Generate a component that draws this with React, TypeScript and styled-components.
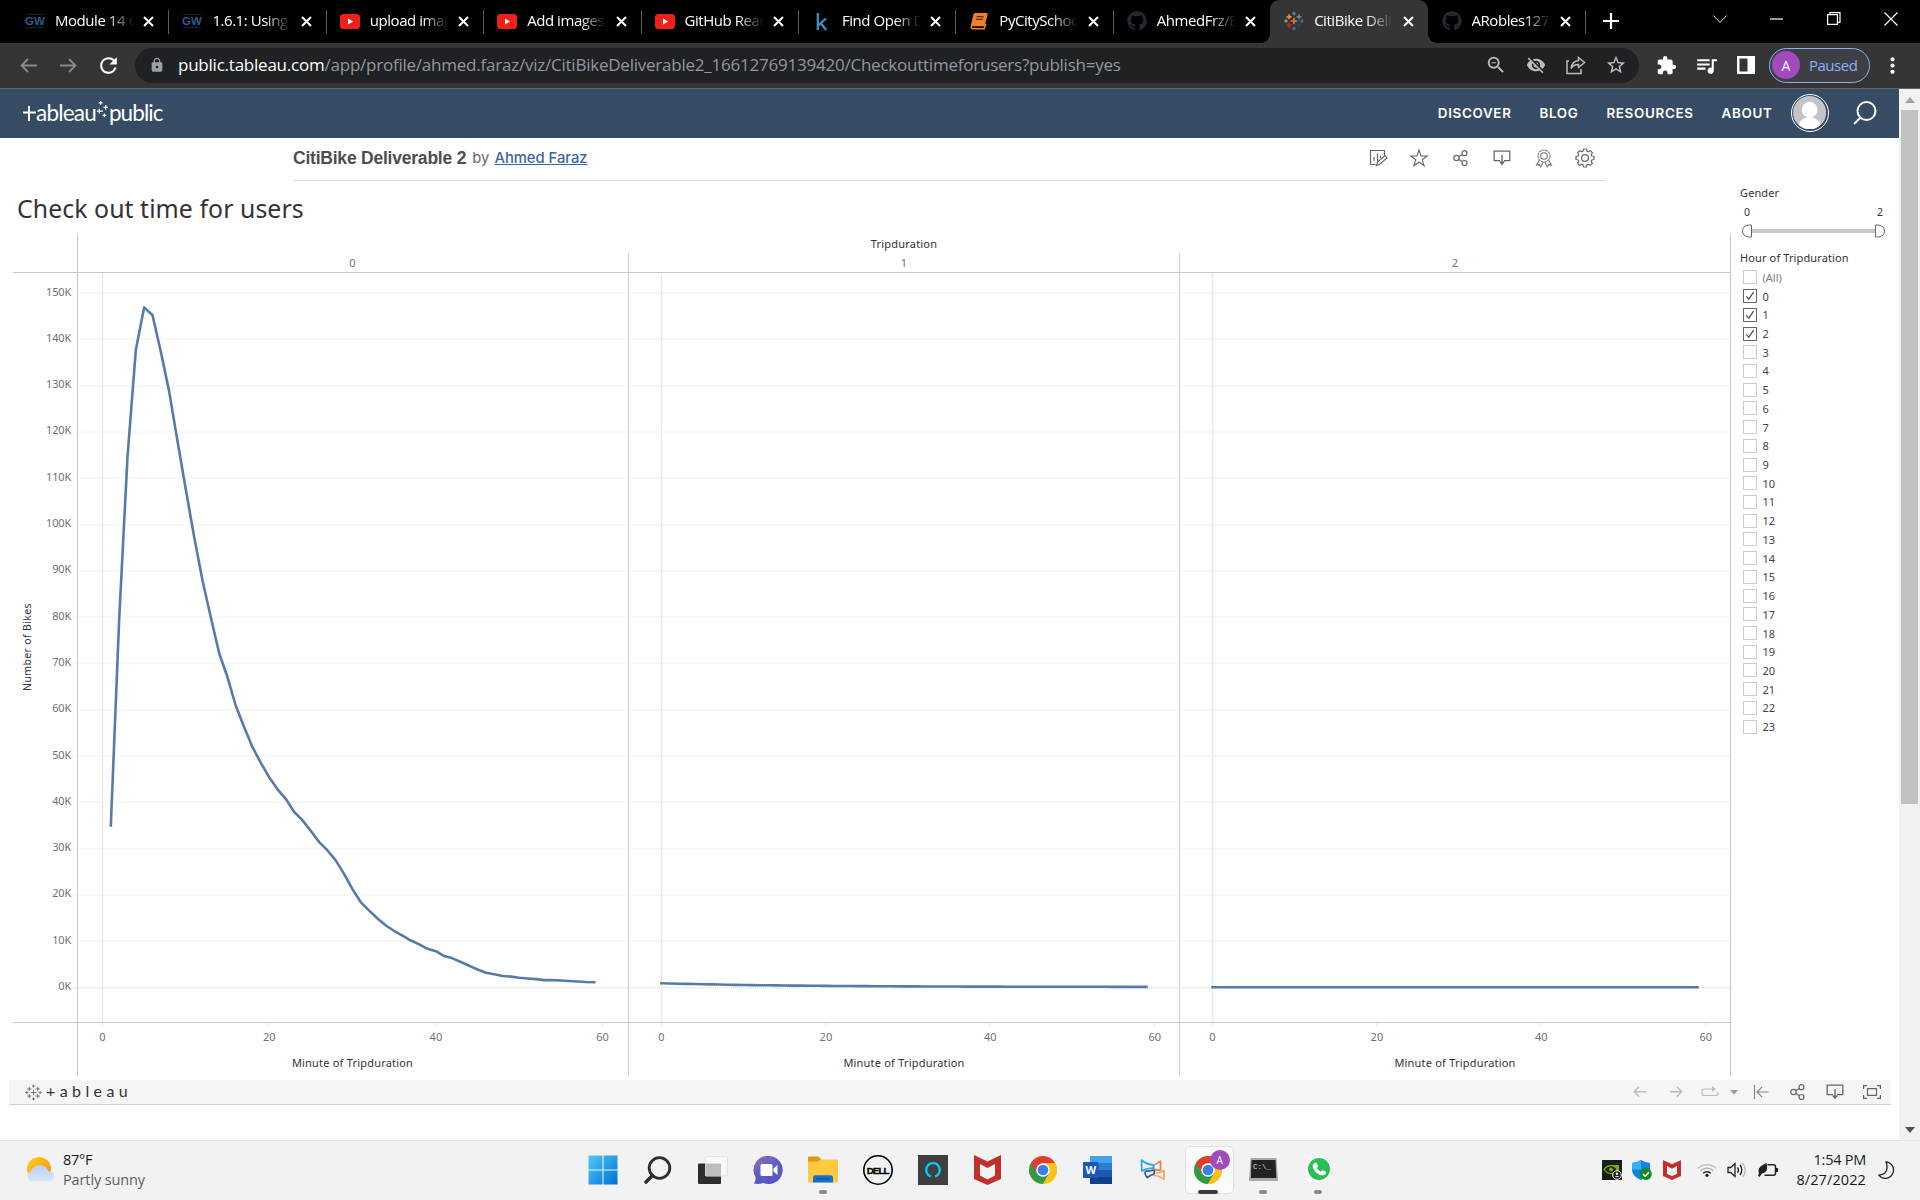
import React from "react";
import styled, { createGlobalStyle, css } from "styled-components";
import {
  MdZoomOut,
  MdExtension,
  MdQueueMusic,
  MdStarOutline,
  MdLock,
  MdRefresh,
  MdMoreVert,
  MdVisibilityOff,
} from "react-icons/md";
import { FaGithub, FaWhatsapp } from "react-icons/fa";

const ui = `"Open Sans", "Noto Sans", sans-serif`;
const viz = `"Noto Sans", "Open Sans", sans-serif`;

const GlobalStyle = createGlobalStyle`
  body { margin: 0; background: #fff; overflow: hidden; }
  *, *::before, *::after { box-sizing: border-box; }
  svg { display: block; flex: none; }
`;

const Screen = styled.div`
  width: 1920px;
  height: 1200px;
  display: flex;
  flex-direction: column;
  background: #fff;
  font-family: ${ui};
  overflow: hidden;
`;

/* ---------- Browser chrome ---------- */

const TabStrip = styled.div`
  flex: none;
  height: 43px;
  display: flex;
  align-items: stretch;
  background: #000;
  padding-left: 11px;
`;

const TabBox = styled.div<{ $active?: boolean }>`
  position: relative;
  width: 157.4px;
  height: 43px;
  display: flex;
  align-items: center;
  padding: 0 14px 1px 14px;
  color: #fff;
  ${(p) =>
    p.$active
      ? css`
          background: #353535;
          border-radius: 9px 9px 0 0;
          &::before,
          &::after {
            content: "";
            position: absolute;
            bottom: 0;
            width: 9px;
            height: 9px;
          }
          &::before {
            left: -9px;
            background: radial-gradient(circle at 0 0, transparent 8.5px, #353535 9px);
          }
          &::after {
            right: -9px;
            background: radial-gradient(circle at 100% 0, transparent 8.5px, #353535 9px);
          }
        `
      : ""}
`;

const TabDivider = styled.i<{ $hidden?: boolean }>`
  position: absolute;
  right: -1px;
  top: 10px;
  width: 1px;
  height: 24px;
  background: ${(p) => (p.$hidden ? "transparent" : "#5a5a5a")};
`;

const Favicon = styled.span`
  width: 20px;
  height: 20px;
  display: flex;
  align-items: center;
  justify-content: center;
`;

const TabTitle = styled.span`
  width: 79px;
  margin: -2px 0 0 10px;
  white-space: nowrap;
  font-size: 15px;
  line-height: 22px;
  letter-spacing: -0.45px;
  mask-image: linear-gradient(to right, #000 66%, transparent 100%);
`;

const CloseMark = styled.span`
  margin-left: auto;
`;

const NewTab = styled.div`
  width: 52px;
  display: flex;
  align-items: center;
  justify-content: center;
  padding-bottom: 1px;
`;

const WindowControls = styled.div`
  margin-left: auto;
  display: flex;
  padding-bottom: 6px;
`;

const WindowButton = styled.div`
  width: 57px;
  display: flex;
  align-items: center;
  justify-content: center;
  position: relative;
  left: -1px;
`;

const Toolbar = styled.div`
  flex: none;
  height: 46px;
  display: flex;
  align-items: center;
  background: #353535;
  border-bottom: 1px solid #636363;
  padding: 0 0 1px 8px;
`;

const ToolButton = styled.span<{ $w?: number; $c?: string }>`
  flex: none;
  width: ${(p) => p.$w ?? 40}px;
  display: flex;
  align-items: center;
  justify-content: center;
  color: ${(p) => p.$c ?? "#fff"};
`;

const Omnibox = styled.div`
  flex: none;
  width: 1504px;
  height: 35px;
  margin: 0 7px 0 7px;
  display: flex;
  align-items: center;
  border-radius: 18px;
  background: #202124;
  padding: 0 3px 0 14px;
`;

const Url = styled.span`
  flex: 1;
  margin-left: 13px;
  font-size: 17px;
  line-height: 26px;
  letter-spacing: -0.23px;
  color: #94979b;
  b {
    color: #fff;
    font-weight: 400;
  }
`;

const ProfilePill = styled.div`
  flex: none;
  width: 101px;
  height: 35px;
  margin-left: 3px;
  display: flex;
  align-items: center;
  gap: 9px;
  padding-left: 2px;
  border: 1.5px solid #8ab0f5;
  border-radius: 18px;
  background: #3e3e45;
  color: #8ab0f5;
  font-size: 15px;
  letter-spacing: -0.5px;
`;

const Initial = styled.span<{ $s: number }>`
  width: ${(p) => p.$s}px;
  height: ${(p) => p.$s}px;
  display: flex;
  align-items: center;
  justify-content: center;
  border-radius: 50%;
  background: #a04abb;
  color: #fff;
  font-size: ${(p) => p.$s / 2}px;
  letter-spacing: 0;
`;

/* ---------- Page ---------- */

const Viewport = styled.div`
  flex: none;
  height: 1051px;
  display: flex;
`;

const Page = styled.main`
  width: 1899px;
  display: flex;
  flex-direction: column;
`;

const Scrollbar = styled.div`
  width: 21px;
  display: flex;
  flex-direction: column;
  align-items: center;
  background: #f1f1f1;
`;

const ScrollArrow = styled.span`
  height: 21px;
  display: flex;
  align-items: center;
`;

const ScrollThumb = styled.span`
  width: 17px;
  height: 694px;
  margin-bottom: auto;
  background: #c1c1c1;
`;

const SiteHeader = styled.header`
  flex: none;
  height: 49px;
  display: flex;
  align-items: center;
  background: #354c64;
  color: #fff;
  padding: 0 22px 1px 23px;
`;

const Brand = styled.div`
  display: flex;
  align-items: center;
`;

const BrandWord = styled.span<{ $ls: number }>`
  font-family: Lato, sans-serif;
  font-size: 22.5px;
  line-height: 28px;
  letter-spacing: ${(p) => p.$ls}px;
`;

const SiteNav = styled.nav`
  margin-left: auto;
  display: flex;
  align-items: center;
  gap: 27.9px;
  padding-bottom: 1px;
  font-family: Inter, sans-serif;
  font-weight: 600;
  font-size: 13.4px;
  letter-spacing: 0.68px;
`;

const Avatar = styled.div`
  width: 38px;
  height: 38px;
  margin: 0 24px 0 18.5px;
  border: 1.4px solid #fff;
  border-radius: 50%;
  padding: 1px;
`;

const VizHeader = styled.div`
  flex: none;
  width: 1313px;
  height: 43px;
  margin-left: 293px;
  display: flex;
  align-items: center;
  border-bottom: 1px solid #d9d9d9;
  padding: 0 9px 2px 0;
`;

const VizName = styled.h1`
  margin: 0;
  font: 700 17.5px "Liberation Sans", Arial, sans-serif;
  letter-spacing: -0.22px;
  color: #4d4d4d;
`;

const Byline = styled.span`
  margin-left: 6px;
  font: 400 14.8px Inter, sans-serif;
  color: #666;
  a {
    margin-left: 1px;
    color: #3a67a0;
    font-weight: 500;
    text-decoration: underline;
    letter-spacing: -0.03px;
  }
`;

const VizActions = styled.div`
  margin-left: auto;
  display: flex;
  gap: 17.4px;
`;

const Workbook = styled.section`
  height: 899px;
  display: flex;
`;

const Sheet = styled.div`
  width: 1731px;
  padding: 9px 0 0 13px;
  display: flex;
  flex-direction: column;
`;

const SheetTitle = styled.h2`
  height: 44px;
  margin: 0 0 0 4px;
  font: 400 24.8px/37px ${viz};
  letter-spacing: 0.08px;
  color: #333;
`;

const Filters = styled.aside`
  width: 168px;
  padding: 4px 0 0 9px;
  font: 400 11px/16px ${viz};
  color: #333;
`;

const FilterTitle = styled.div`
  height: 19px;
  letter-spacing: 0.12px;
`;

const RangeValues = styled.div`
  width: 146px;
  height: 20px;
  display: flex;
  justify-content: space-between;
  padding: 0 3px 0 4px;
  font-size: 10.5px;
`;

const RangeTrack = styled.div`
  width: 143px;
  height: 26px;
  margin: 0 0 0 2px;
`;

const HourList = styled.ul`
  margin: -1px 0 0;
  padding: 0 0 0 3px;
  list-style: none;
`;

const HourRow = styled.li<{ $muted?: boolean }>`
  height: 18.72px;
  display: flex;
  align-items: center;
  gap: 5.5px;
  line-height: 15px;
  color: ${(p) => (p.$muted ? "#7d7d7d" : "#444")};
`;

const CheckBox = styled.span<{ $on?: boolean }>`
  width: 14px;
  height: 14px;
  display: flex;
  align-items: center;
  justify-content: center;
  border: 1px solid ${(p) => (p.$on ? "#666" : "#ccc")};
  background: #fff;
`;

const VizFooter = styled.div`
  flex: none;
  width: 1882px;
  height: 25px;
  margin-left: 9px;
  display: flex;
  align-items: center;
  background: #f5f5f5;
  border-bottom: 1px solid #cfcfcf;
  padding: 0 0 0 16px;
  color: #555;
`;

const FooterWord = styled.span`
  margin: -2px 0 0 4px;
  font: 400 16px/20px Lato, sans-serif;
  letter-spacing: 4.4px;
  color: #333;
`;

const FooterTools = styled.div`
  margin-left: auto;
  display: flex;
  align-items: center;
`;

const FooterTool = styled.span<{ $w: number; $off?: boolean }>`
  width: ${(p) => p.$w}px;
  display: flex;
  justify-content: center;
  color: ${(p) => (p.$off ? "#bdbdbd" : "#666")};
`;

/* ---------- Taskbar ---------- */

const Taskbar = styled.footer`
  flex: 1;
  display: flex;
  align-items: center;
  justify-content: space-between;
  background: #f2f2f2;
  border-top: 1px solid #e2e2e2;
  padding: 0 25px 2px 26px;
  color: #1b1b1b;
`;

const Weather = styled.div`
  width: 549px;
  display: flex;
  align-items: center;
  gap: 8px;
  font-size: 14.5px;
  line-height: 20px;
  letter-spacing: -0.3px;
`;

const Muted = styled.div`
  color: #5e5e5e;
  letter-spacing: -0.12px;
`;

const Apps = styled.div`
  display: flex;
  align-items: center;
`;

const AppSlot = styled.div<{ $active?: boolean }>`
  position: relative;
  width: 55.07px;
  height: 48px;
  display: flex;
  align-items: center;
  justify-content: center;
  &::before {
    content: "";
    position: absolute;
    inset: 0 2px 0 4px;
    border-radius: 5px;
    ${(p) => (p.$active ? "background:#fafafa;border:1px solid #e2e2e2;" : "")}
  }
  svg {
    position: relative;
  }
`;

const RunningMark = styled.i<{ $wide?: boolean }>`
  position: absolute;
  bottom: 0;
  width: ${(p) => (p.$wide ? 20 : 8)}px;
  height: 4px;
  border-radius: 2px;
  background: ${(p) => (p.$wide ? "#3c3c3c" : "#8a8a8a")};
`;

const AppBadge = styled.span`
  position: absolute;
  top: 4px;
  right: 6px;
`;

const Tray = styled.div`
  margin-left: auto;
  display: flex;
  align-items: center;
`;

const TrayItem = styled.span<{ $w: number }>`
  width: ${(p) => p.$w}px;
  display: flex;
  justify-content: center;
`;

const Clock = styled.div`
  width: 78px;
  display: flex;
  flex-direction: column;
  align-items: flex-end;
  font-size: 14.5px;
  line-height: 20px;
  white-space: nowrap;
`;

const ClockLine = styled.span<{ $ls: number }>`
  letter-spacing: ${(p) => p.$ls}px;
`;

const Moon = styled.span`
  width: 29px;
  display: flex;
  justify-content: flex-end;
`;

/* ---------- Icons ---------- */

const Gw = () => (
  <svg width="20" height="14" viewBox="0 0 20 14">
    <path d="M1 .5h18M1 13.5h18" stroke="#11253a" />
    <text x="10" y="11.2" textAnchor="middle" fontFamily="Liberation Sans" fontWeight="700" fontSize="11.5" fill="#295b8a">GW</text>
  </svg>
);
const YouTube = () => (
  <svg width="20" height="15" viewBox="0 0 20 15">
    <rect width="20" height="15" rx="3.6" fill="#ee2017" />
    <path d="M8 4.4v6.2l5.2-3.1z" fill="#fff" />
  </svg>
);
const Kaggle = () => (
  <svg width="12" height="19" viewBox="0 0 12 19">
    <path d="M1.8 1v17M10 6.5L2.5 13.2M4.8 11.2l5.400 6.800" stroke="#3f8fbd" strokeWidth="2.300" fill="none" />
  </svg>
);
const Notebook = () => (
  <svg width="18" height="17" viewBox="0 0 18 17">
    <path d="M4.5.5h11.3q1.4 0 1 1.4l-2.6 9.6q-.3 1-1.4 1H3q-1.6 0-1.8 1.5t1.6 1.7h11.4l1.5-5" fill="none" stroke="#ef8023" strokeWidth="1.6" />
    <path d="M4.4.5h11.3q1.4 0 1 1.4l-2.8 10.2H.9L3.4 1.6z" fill="#ef8023" />
    <path d="M6.5 3.7h7.2M5.9 6.3h7.2" stroke="#30180a" strokeWidth="1.1" />
  </svg>
);

const plusPoints: [number, number, number, string][] = [
  [12, 12, 4, "#e8762c"],
  [12, 3, 2, "#5b879b"],
  [12, 21, 2, "#5b6591"],
  [6, 7, 3, "#eb912c"],
  [18, 7, 3, "#59879b"],
  [6, 17, 3, "#c72035"],
  [18, 17, 3, "#1f447e"],
  [2.5, 12, 2, "#7099a6"],
  [21.5, 12, 2, "#5b6591"],
];
const TableauMark = ({ size, mono, stroke = 1.6 }: { size: number; mono?: string; stroke?: number }) => (
  <svg width={size} height={size} viewBox="0 0 24 24">
    {plusPoints.map(([x, y, r, c], i) => (
      <path key={i} d={`M${x - r} ${y}h${2 * r}M${x} ${y - r}v${2 * r}`} stroke={mono ?? c} strokeWidth={stroke} />
    ))}
  </svg>
);

const Cross = () => (
  <svg width="11" height="11" viewBox="0 0 11 11">
    <path d="M1 1l9 9M10 1l-9 9" stroke="#fff" strokeWidth="2" />
  </svg>
);

const Arrow = ({ flip, w = 17, h = 15, sw = 1.8 }: { flip?: boolean; w?: number; h?: number; sw?: number }) => (
  <svg width={w} height={h} viewBox="0 0 17 15" fill="none" stroke="currentColor" strokeWidth={sw}>
    {flip ? <path d="M0 7.5h15.5M9 1l6.5 6.5L9 14" /> : <path d="M17 7.5H1.5M8 1L1.5 7.5 8 14" />}
  </svg>
);

const ShareArrow = () => (
  <svg width="20" height="20" viewBox="0 0 20 20" fill="none" stroke="currentColor" strokeWidth="1.5">
    <path d="M3 6H1v12.5h14V14" />
    <path d="M12.5 2.5l6 5-6 5V9.6Q7.500 9.500 5 13.500 6 6.500 12.500 5.600z" />
  </svg>
);

const SidePanel = () => (
  <svg width="18" height="18" viewBox="0 0 18 18">
    <path fillRule="evenodd" fill="#fff" d="M0 0h18v18H0zM2.500 2.500v13h8v-13z" />
  </svg>
);

const EditViz = () => (
  <svg width="24" height="24" viewBox="0 0 24 24" fill="none" stroke="#666" strokeWidth="1.2">
    <path d="M18.500 10V4.500h-14v14h5M8 15v-4M11.500 15V7.500M14.500 12V9.500" />
    <path d="M10.500 19.500l1-3.500 7.500-6.500 2 2.500-7.500 6.500z" />
  </svg>
);
const StarLine = () => (
  <svg width="24" height="24" viewBox="0 0 24 24" fill="none" stroke="#666" strokeWidth="1.1">
    <path d="M12 4l2 6h6.200l-5 3.700 1.900 6-5.100-3.700-5.100 3.700 1.900-6-5-3.700H10z" />
  </svg>
);
const ShareNodes = ({ size = 24 }: { size?: number }) => (
  <svg width={size} height={size} viewBox="0 0 24 24" fill="none" stroke="#666" strokeWidth="1.2">
    <circle cx="7.500" cy="12" r="2.700" />
    <circle cx="15.500" cy="7.200" r="2.500" />
    <circle cx="15.500" cy="17" r="2.500" />
    <path d="M9.800 10.600l3.600-2.200M9.800 13.500l3.700 2.200" />
  </svg>
);
const DownloadBox = () => (
  <svg width="24" height="24" viewBox="0 0 24 24" fill="none" stroke="#666" strokeWidth="1.3">
    <path d="M10 14.700H4.200V5.200h15.600v9.500H14M12 9v8" />
    <path d="M9 15.500h6l-3 3.700z" fill="#666" stroke="none" />
  </svg>
);
const Ribbon = () => (
  <svg width="24" height="24" viewBox="0 0 24 24" fill="none" stroke="#777" strokeWidth="1.100">
    <circle cx="12" cy="10" r="6" strokeDasharray="2.600 .6" />
    <circle cx="12" cy="10" r="3.300" />
    <path d="M7.500 14l-3 5 2.800-.3L8.800 21l2.400-5M16.500 14l3 5-2.800-.3L15.200 21l-2.400-5" />
  </svg>
);
const Gear = () => (
  <svg width="24" height="24" viewBox="0 0 24 24" fill="none" stroke="#666" strokeWidth="1.200">
    <circle cx="12" cy="12" r="3.400" />
    <path d="M10.500 4h3l.5 2.200 1.400.6 1.900-1.200 2.100 2.100-1.200 1.900.6 1.400 2.200.5v3l-2.200.5-.6 1.400 1.200 1.900-2.100 2.100-1.900-1.200-1.400.6-.5 2.200h-3l-.5-2.200-1.400-.6-1.900 1.200-2.100-2.100 1.200-1.900-.6-1.400-2.200-.5v-3l2.200-.5.6-1.400-1.200-1.900 2.100-2.100 1.900 1.200 1.400-.6z" strokeLinejoin="round" transform="translate(0 -1)" />
  </svg>
);

const McAfee = ({ w, h }: { w: number; h: number }) => (
  <svg width={w} height={h} viewBox="0 0 27 30">
    <path fillRule="evenodd" fill="#c1302c" d="M0 0l13.500 6.500L27 0v24l-13.500 6L0 24zM6 9v11.500l7.500 4 7.500-4V9l-7.500 4z" />
  </svg>
);

const Chrome = () => (
  <svg width="28" height="28" viewBox="0 0 28 28">
    <circle cx="14" cy="14" r="14" fill="#fbc116" />
    <path d="M14 14L1.880 7A14 14 0 0 0 14 28l6.060-10.500z" fill="#2f9a4c" />
    <path d="M1.880 7A14 14 0 0 1 26.120 7H14l-6.060 10.500z" fill="#e03e31" />
    <path d="M26.120 7H14v7l6.060 3.500L14 28A14 14 0 0 0 26.120 7z" fill="#fbc116" />
    <circle cx="14" cy="14" r="6.800" fill="#fff" />
    <circle cx="14" cy="14" r="5.300" fill="#3b7ded" />
  </svg>
);

/* ---------- Data ---------- */

const bikes = [
  35, 79.5, 114.6, 137.7, 146.9, 145.2, 137.3, 128.7, 118, 107.5, 97.3, 87.9, 79.9, 72.2, 67, 60.8, 56.2, 51.9, 48.5,
  45.4, 42.8, 40.7, 37.9, 36.1, 33.8, 31.4, 29.6, 27.4, 24.5, 21.2, 18.4, 16.6, 14.9, 13.4, 12.2, 11.2, 10.15, 9.3,
  8.35, 7.85, 6.8, 6.3, 5.5, 4.7, 3.9, 3.2, 2.85, 2.5, 2.35, 2.1, 1.95, 1.8, 1.6, 1.6, 1.5, 1.4, 1.3, 1.2, 1.15,
];
const hourOne = Array.from({ length: 60 }, (_, m) => 0.12 + 0.8 * Math.exp(-m / 16));
const hourTwo = Array.from({ length: 60 }, () => 0.05);

const panels = [
  { left: 64, right: 616, zero: 89.5, step: 8.335, start: 1, values: bikes },
  { left: 616, right: 1167, zero: 648.5, step: 8.22, start: 0, values: hourOne },
  { left: 1167, right: 1718, zero: 1199.5, step: 8.22, start: 0, values: hourTwo },
];
const baseY = 753.5;
const perK = 4.63;
const top = 38.5;
const bottom = 788.5;

const Plot = () => (
  <svg width="1718" height="842" viewBox="0 0 1718 842" fontFamily={viz} fontSize="11">
    {Array.from({ length: 15 }, (_, i) => {
      const y = Math.round(baseY - (i + 1) * 10 * perK);
      return <path key={i} d={`M60 ${y}H1717`} stroke="#f8f8f8" strokeWidth="2" />;
    })}
    <path d={`M60 ${baseY}H1717`} stroke="#dedede" strokeDasharray="1 1" />
    <path d={`M60 ${baseY + 1}H1717`} stroke="#f6f6f6" />
    {panels.map((p, n) => (
      <g key={n}>
        <path d={`M${p.zero} ${top}V${bottom}`} stroke="#f5f5f5" strokeWidth="2" />
        <path d={`M${p.zero} ${top}V${bottom}`} stroke="#dcdcdc" strokeDasharray="1 1" />
        {[0, 20, 40, 60].map((m) => (
          <g key={m}>
            <path d={`M${Math.round(p.zero + m * p.step) - 0.5} ${bottom}v4`} stroke="#e8e8e8" />
            <text x={p.zero + m * p.step} y="807" textAnchor="middle" fill="#707070">{m}</text>
          </g>
        ))}
        <text x={(p.left + p.right) / 2 - 0.5} y="833" textAnchor="middle" fill="#333" letterSpacing="0.2">Minute of Tripduration</text>
        <text x={(p.left + p.right) / 2 - 0.5} y="33" textAnchor="middle" fill="#707070">{n}</text>
        <polyline
          fill="none"
          stroke="#567bab"
          strokeWidth="2.6"
          strokeLinejoin="round"
          strokeLinecap="square"
          points={p.values.map((v, i) => `${p.zero + (i + p.start) * p.step},${baseY - v * perK}`).join(" ")}
        />
      </g>
    ))}
    <text x="891" y="14" textAnchor="middle" fill="#333" letterSpacing="0.2">Tripduration</text>
    {Array.from({ length: 16 }, (_, i) => (
      <text key={i} x="58" y={Math.round(baseY - i * 10 * perK + 2.5)} textAnchor="end" fill="#707070" letterSpacing="-0.2">{i * 10}K</text>
    ))}
    <text transform="translate(18 413) rotate(-90)" textAnchor="middle" fill="#333" letterSpacing="0.35" fontSize="10.500">Number of Bikes</text>
    <g stroke="#c8c8c8">
      <path d={`M0 ${top}H1718M0 ${bottom}H1718`} />
      <path d="M64.500 0V842M1717.500 0V842" />
      <path d="M615.500 19V842M1166.500 19V842" stroke="#d2d2d2" />
    </g>
  </svg>
);

const tabs: { icon: React.ReactNode; title: string; active?: boolean; bare?: boolean }[] = [
  { icon: <Gw />, title: "Module 14 C" },
  { icon: <Gw />, title: "1.6.1: Using" },
  { icon: <YouTube />, title: "upload imag" },
  { icon: <YouTube />, title: "Add images" },
  { icon: <YouTube />, title: "GitHub Read" },
  { icon: <Kaggle />, title: "Find Open D" },
  { icon: <Notebook />, title: "PyCitySchoo" },
  { icon: <FaGithub size={20} color="#24292f" />, title: "AhmedFrz/B", bare: true },
  { icon: <TableauMark size={20} stroke={2} />, title: "CitiBike Deli", active: true },
  { icon: <FaGithub size={20} color="#24292f" />, title: "ARobles127" },
];

const hours = ["(All)", ...Array.from({ length: 24 }, (_, i) => String(i))];

const apps: { icon: React.ReactNode; running?: boolean; active?: boolean }[] = [
  {
    icon: (
      <svg width="30" height="30" viewBox="0 0 30 30">
        <defs>
          <linearGradient id="win" x1="0" y1="0" x2="1" y2="1">
            <stop offset="0" stopColor="#4fcbf9" />
            <stop offset="1" stopColor="#0070d0" />
          </linearGradient>
        </defs>
        <path fill="url(#win)" d="M.5.500h14v14H.500zM15.500.500h14v14h-14zM.500 15.500h14v14H.500zM15.500 15.500h14v14h-14z" />
      </svg>
    ),
  },
  {
    icon: (
      <svg width="28" height="28" viewBox="0 0 28 28" fill="none" stroke="#2e2e2e">
        <circle cx="15.500" cy="12" r="10.300" strokeWidth="2.800" />
        <path d="M8.500 19.500L2 26" strokeWidth="3.600" strokeLinecap="round" />
      </svg>
    ),
  },
  {
    icon: (
      <svg width="30" height="28" viewBox="0 0 30 28">
        <rect y="7.500" width="23" height="20.500" rx="1" fill="#2d2d2d" />
        <rect x="7.500" y=".5" width="22" height="19.500" rx="1" fill="#f8f8f8" stroke="#e2e2e2" />
        <rect x="7.500" y="7.500" width="15.500" height="12.500" fill="#bdbdbd" />
      </svg>
    ),
  },
  {
    icon: (
      <svg width="30" height="28" viewBox="0 0 30 28">
        <defs>
          <linearGradient id="chat" x1="0" y1="0" x2=".6" y2="1">
            <stop offset="0" stopColor="#9a6fb5" />
            <stop offset=".6" stopColor="#5a5bc8" />
            <stop offset="1" stopColor="#5357c4" />
          </linearGradient>
        </defs>
        <path d="M15.500 0a14 14 0 1 1-5 27Q5 28.500 1 27.500 3 24.500 2.500 21A14 14 0 0 1 15.500 0z" fill="url(#chat)" />
        <rect x="7.500" y="8" width="12" height="12" rx="1.500" fill="#fff" />
        <path d="M20.500 12.500l4-3.500v10l-4-3.500z" fill="#fff" />
      </svg>
    ),
  },
  {
    icon: (
      <svg width="30" height="27" viewBox="0 0 30 27">
        <path d="M0 1.500Q0 .5 1 .5h8.500q1 0 1.700.8l2 2.200V9H0z" fill="#dc9c09" />
        <path d="M0 5.500h10l3-2H30v22q0 1-1 1H1q-1 0-1-1z" fill="#fdca3f" />
        <path d="M5 26.500v-5q0-2.200 2.200-2.200h15.600q2.200 0 2.200 2.200v5z" fill="#1273cf" />
        <path d="M8.500 23h13" stroke="#0b4a91" />
      </svg>
    ),
    running: true,
  },
  {
    icon: (
      <svg width="30" height="30" viewBox="0 0 30 30">
        <circle cx="15" cy="15" r="14.200" fill="none" stroke="#000" strokeWidth="1.600" />
        <text x="14.600" y="18.500" textAnchor="middle" fontFamily="Liberation Sans" fontWeight="700" fontSize="9.800" letterSpacing="-1" stroke="#000" strokeWidth=".3">DELL</text>
      </svg>
    ),
  },
  {
    icon: (
      <svg width="30" height="30" viewBox="0 0 30 30">
        <rect width="30" height="30" fill="#3f3f3f" />
        <path d="M13 21.500a6.800 6.800 0 1 1 4 0" fill="none" stroke="#05ccf5" strokeWidth="2.200" />
      </svg>
    ),
  },
  { icon: <McAfee w={27} h={30} /> },
  { icon: <Chrome /> },
  {
    icon: (
      <svg width="30" height="28" viewBox="0 0 30 28">
        <path d="M7 0h22v28H8z" fill="#1b57b4" />
        <path d="M7 0h22v7H7z" fill="#43a3ee" />
        <path d="M7 7h22v7H7z" fill="#2a7cd5" />
        <path d="M7 21h22v7H7z" fill="#123f8c" />
        <rect y="6" width="15.500" height="16" rx="1" fill="#1858ba" />
        <text x="7.700" y="18" textAnchor="middle" fontFamily="Open Sans" fontWeight="700" fontSize="11" fill="#fff">W</text>
      </svg>
    ),
  },
  {
    icon: (
      <svg width="26" height="22" viewBox="0 0 26 22" fill="none" strokeWidth="1.700" strokeLinejoin="round">
        <path d="M5.500 12q5 .5 9-1.500M5 12.500q0 4 2 6 3-2 7-3.500l.5-4" stroke="#28519b" />
        <path d="M15.500 14q5 0 8.500-2.500v9Q20 16.500 13 16.500" stroke="#f3ab5d" />
        <path d="M13.500 6q4-1 7-4v9q-4 .5-7-1z" stroke="#ef7a50" />
        <path d="M1.500 1q5 4.500 12 5v3Q7 9 1.800 12z" stroke="#22a9ea" />
      </svg>
    ),
  },
  { icon: <Chrome />, running: true, active: true },
  {
    icon: (
      <svg width="29" height="23" viewBox="0 0 29 23">
        <path d="M1.500 0h26l1.500 23H0z" fill="#a9a9a9" />
        <path d="M2.500 2h24l.8 18H1.800z" fill="#222" />
        <text x="4" y="10.500" fontFamily="Liberation Mono" fontSize="7.500" fill="#ddd">C:\_</text>
      </svg>
    ),
    running: true,
  },
  {
    icon: (
      <svg width="27" height="27" viewBox="0 0 27 27">
        <path d="M14 .5a12.700 12.700 0 1 1-6 24L1 26.500l2-6.500A12.700 12.700 0 0 1 14 .500z" fill="#fff" />
        <circle cx="14" cy="13" r="11" fill="#27c052" />
        <path d="M9.500 6.800l2-.3 1.600 3.700-1.200 1.700q1.400 2.700 4 3.800l1.600-1.600 3.500 1.700q.2 3.200-3.200 3.700-7-.6-9.900-8-.8-3 1.600-5z" fill="#fff" />
      </svg>
    ),
    running: true,
  },
];

export default function App() {
  return (
    <Screen>
      <GlobalStyle />
      <TabStrip>
        {tabs.map((t, i) => (
          <TabBox key={i} $active={t.active}>
            <Favicon>{t.icon}</Favicon>
            <TabTitle>{t.title}</TabTitle>
            <CloseMark><Cross /></CloseMark>
            <TabDivider $hidden={t.active || t.bare} />
          </TabBox>
        ))}
        <NewTab>
          <svg width="16" height="16" viewBox="0 0 16 16"><path d="M0 8h16M8 0v16" stroke="#fff" strokeWidth="2.200" /></svg>
        </NewTab>
        <WindowControls>
          <WindowButton>
            <svg width="14" height="8" viewBox="0 0 14 8" fill="none" stroke="#ddd"><path d="M.5.500L7 7.500 13.500.500" /></svg>
          </WindowButton>
          <WindowButton>
            <svg width="13" height="2" viewBox="0 0 13 2"><path d="M0 1h13" stroke="#fff" strokeWidth="1.200" /></svg>
          </WindowButton>
          <WindowButton>
            <svg width="14" height="13" viewBox="0 0 14 13" fill="none" stroke="#fff" strokeWidth="1.200"><path d="M.6 2.600h9.800v9.800H.600zM3 2.500V.6h10v9.800h-2.500" /></svg>
          </WindowButton>
          <WindowButton>
            <svg width="14" height="14" viewBox="0 0 14 14" stroke="#fff" strokeWidth="1.200"><path d="M.5.500l13 13M13.500.500l-13 13" /></svg>
          </WindowButton>
        </WindowControls>
      </TabStrip>

      <Toolbar>
        <ToolButton $c="#8a8a8a"><Arrow /></ToolButton>
        <ToolButton $c="#8a8a8a"><Arrow flip /></ToolButton>
        <ToolButton><MdRefresh size={25} /></ToolButton>
        <Omnibox>
          <MdLock size={16} color="#9aa0a6" />
          <Url><b>public.tableau.com</b>/app/profile/ahmed.faraz/viz/CitiBikeDeliverable2_16612769139420/Checkouttimeforusers?publish=yes</Url>
          <ToolButton $c="#bdbdbd"><MdZoomOut size={22} /></ToolButton>
          <ToolButton $c="#bdbdbd"><MdVisibilityOff size={20} /></ToolButton>
          <ToolButton $c="#bdbdbd"><ShareArrow /></ToolButton>
          <ToolButton $c="#bdbdbd"><MdStarOutline size={22} /></ToolButton>
        </Omnibox>
        <ToolButton><MdExtension size={21} /></ToolButton>
        <ToolButton><MdQueueMusic size={25} /></ToolButton>
        <ToolButton><SidePanel /></ToolButton>
        <ProfilePill><Initial $s={28}>A</Initial>Paused</ProfilePill>
        <ToolButton $w={44}><MdMoreVert size={25} /></ToolButton>
      </Toolbar>

      <Viewport>
        <Page>
          <SiteHeader>
            <Brand>
              <svg width="13" height="22" viewBox="0 0 13 22"><path d="M0 10.500h13M6 4v15" stroke="#fff" strokeWidth="1.900" /></svg>
              <BrandWord $ls={-0.8}>ableau</BrandWord>
              <svg width="13" height="30" viewBox="0 0 14 30" stroke="#fff" strokeWidth="1.300">
                <path d="M1 13h5M3.500 10.500v5M3 4h4M5 2v4M8 9h5M10.500 6.500v5M7 17.500h4M9 15.500v4M6 13h1.500" />
              </svg>
              <BrandWord $ls={-0.9}>public</BrandWord>
            </Brand>
            <SiteNav>
              <span>DISCOVER</span>
              <span>BLOG</span>
              <span>RESOURCES</span>
              <span>ABOUT</span>
            </SiteNav>
            <Avatar>
              <svg width="33.200" height="33.200" viewBox="0 0 34 34">
                <defs><clipPath id="face"><circle cx="17" cy="17" r="17" /></clipPath></defs>
                <g clipPath="url(#face)">
                  <rect width="34" height="34" fill="#c4c4c4" />
                  <circle cx="17" cy="14" r="8" fill="#fff" />
                  <ellipse cx="17" cy="32" rx="11.500" ry="10.500" fill="#fff" />
                </g>
              </svg>
            </Avatar>
            <svg width="24" height="24" viewBox="0 0 24 24" fill="none" stroke="#fff" strokeWidth="2">
              <circle cx="13.500" cy="10" r="9" />
              <path d="M7.500 16.500L1 23" />
            </svg>
          </SiteHeader>

          <VizHeader>
            <VizName>CitiBike Deliverable 2</VizName>
            <Byline>by <a>Ahmed Faraz</a></Byline>
            <VizActions>
              <EditViz />
              <StarLine />
              <ShareNodes />
              <DownloadBox />
              <Ribbon />
              <Gear />
            </VizActions>
          </VizHeader>

          <Workbook>
            <Sheet>
              <SheetTitle>Check out time for users</SheetTitle>
              <Plot />
            </Sheet>
            <Filters>
              <FilterTitle>Gender</FilterTitle>
              <RangeValues><span>0</span><span>2</span></RangeValues>
              <RangeTrack>
                <svg width="143" height="14" viewBox="0 0 143 14">
                  <path d="M9 7h125" stroke="#c9c9c9" strokeWidth="4" />
                  <path d="M9.500 1v12H6.500Q.5 12 .5 7t6-6zM133.500 1v12h3q6-1 6-6t-6-6z" fill="#fff" stroke="#666" />
                </svg>
              </RangeTrack>
              <FilterTitle>Hour of Tripduration</FilterTitle>
              <HourList>
                {hours.map((h) => {
                  const on = h === "0" || h === "1" || h === "2";
                  return (
                    <HourRow key={h} $muted={h === "(All)"}>
                      <CheckBox $on={on}>
                        {on && (
                          <svg width="10" height="10" viewBox="0 0 10 10"><path d="M1.300 5.400l2.500 2.800L8.600 1.200" fill="none" stroke="#555" strokeWidth="1.400" /></svg>
                        )}
                      </CheckBox>
                      {h}
                    </HourRow>
                  );
                })}
              </HourList>
            </Filters>
          </Workbook>

          <VizFooter>
            <TableauMark size={17} mono="#666" stroke={1.3} />
            <FooterWord>+ableau</FooterWord>
            <FooterTools>
              <FooterTool $w={38} $off><Arrow w={13} h={11.500} /></FooterTool>
              <FooterTool $w={37} $off><Arrow flip w={13} h={11.500} /></FooterTool>
              <FooterTool $w={30} $off>
                <svg width="18" height="12" viewBox="0 0 18 12" fill="none" stroke="currentColor" strokeWidth="1.200">
                  <path d="M14 3H3Q1 3 1 5v2.500q0 2 2 2h12q2 0 2-2V6" />
                  <path d="M11 0v6l4-3z" fill="currentColor" stroke="none" />
                </svg>
              </FooterTool>
              <FooterTool $w={18} $off>
                <svg width="8" height="5" viewBox="0 0 8 5"><path d="M0 0h8L4 4.500z" fill="#999" /></svg>
              </FooterTool>
              <FooterTool $w={35}>
                <svg width="16" height="14" viewBox="0 0 16 14" fill="none" stroke="#8a8a8a" strokeWidth="1.200"><path d="M1.500 0v14M15.500 7H4M9 2L4 7l5 5" /></svg>
              </FooterTool>
              <FooterTool $w={39}><ShareNodes /></FooterTool>
              <FooterTool $w={36}><DownloadBox /></FooterTool>
              <FooterTool $w={38}>
                <svg width="18" height="14" viewBox="0 0 18 14" fill="none" stroke="currentColor" strokeWidth="1.200">
                  <path d="M4.500 3.700h9v6.600h-9zM.6 4V.6H4M14 .6h3.400V4M17.400 10v3.400H14M4 13.400H.6V10" />
                </svg>
              </FooterTool>
            </FooterTools>
          </VizFooter>
        </Page>
        <Scrollbar>
          <ScrollArrow><svg width="10" height="6" viewBox="0 0 10 6"><path d="M5 0l5 6H0z" fill="#a3a3a3" /></svg></ScrollArrow>
          <ScrollThumb />
          <ScrollArrow><svg width="10" height="6" viewBox="0 0 10 6"><path d="M5 6l5-6H0z" fill="#505050" /></svg></ScrollArrow>
        </Scrollbar>
      </Viewport>

      <Taskbar>
        <Weather>
          <svg width="29" height="25" viewBox="0 0 29 25">
            <defs>
              <linearGradient id="sun" x1="0" y1="0" x2="1" y2="1">
                <stop offset="0" stopColor="#ffd021" />
                <stop offset="1" stopColor="#f08c0c" />
              </linearGradient>
              <linearGradient id="cloud" x1="0" y1="0" x2="0" y2="1">
                <stop offset="0" stopColor="#b4d1f7" />
                <stop offset="1" stopColor="#dbe6f3" />
              </linearGradient>
            </defs>
            <circle cx="13" cy="12" r="12" fill="url(#sun)" />
            <path d="M6 24.500a5.500 5.500 0 0 1-1-10.500 9.500 9.500 0 0 1 17.500 0 5.300 5.300 0 0 1 1 10.500z" fill="url(#cloud)" />
          </svg>
          <div>
            <div>87°F</div>
            <Muted>Partly sunny</Muted>
          </div>
        </Weather>
        <Apps>
          {apps.map((a, i) => (
            <AppSlot key={i} $active={a.active}>
              {a.icon}
              {a.active && <AppBadge><Initial $s={20}>A</Initial></AppBadge>}
              {a.running && <RunningMark $wide={a.active} />}
            </AppSlot>
          ))}
        </Apps>
        <Tray>
          <TrayItem $w={31}>
            <svg width="20" height="20" viewBox="0 0 20 20">
              <rect width="20" height="20" fill="#1c1c1c" />
              <path d="M8 5h9v9H8z" fill="#6fae00" />
              <path d="M2 9.500q4-5 9-3.500 3 1.200 4 3.500-3 4.500-7 4Q4.500 12.800 2 9.500z" fill="#1c1c1c" stroke="#76b900" strokeWidth="1.200" />
              <circle cx="9" cy="9.500" r="2" fill="#76b900" />
              <circle cx="15" cy="15" r="4.300" fill="#222" stroke="#fff" />
              <circle cx="15" cy="13.800" r="1.200" fill="#fff" />
              <path d="M12.800 17q2.200-2.200 4.400 0z" fill="#fff" />
            </svg>
          </TrayItem>
          <TrayItem $w={30}>
            <svg width="20" height="20" viewBox="0 0 20 20">
              <path d="M9 0q4 2.700 9 3v7q0 6-9 10Q0 16 0 10V3q5-.3 9-3z" fill="#1581dd" />
              <path d="M9 0v9.500H0V3q5-.3 9-3z" fill="#34b3f2" />
              <circle cx="13.800" cy="14" r="6" fill="#138a1c" />
              <path d="M11 14l2.200 2.200 3.700-3.900" fill="none" stroke="#fff" strokeWidth="1.500" />
            </svg>
          </TrayItem>
          <TrayItem $w={29}><McAfee w={18} h={20} /></TrayItem>
          <TrayItem $w={41}>
            <svg width="20" height="15" viewBox="0 0 20 15" fill="none" strokeWidth="1.500">
              <path d="M.8 6.500a13 13 0 0 1 18.400 0" stroke="#c4c4c4" />
              <path d="M3.500 9a9.200 9.200 0 0 1 13 0" stroke="#b5b5b5" />
              <path d="M6.200 11.300a5.500 5.500 0 0 1 7.600 0" stroke="#222" />
              <circle cx="10" cy="13.300" r="1.600" fill="#222" />
            </svg>
          </TrayItem>
          <TrayItem $w={20}>
            <svg width="20" height="16" viewBox="0 0 20 16" fill="none" stroke="#222" strokeWidth="1.300">
              <path d="M1 5.500h2.700L8 1.500v13l-4.300-4H1zM10.500 5.300q2 2.700 0 5.400M13 3q3.600 5 0 10" />
              <path d="M15.700 1q5 7 0 14" stroke="#bbb" />
            </svg>
          </TrayItem>
          <TrayItem $w={41}>
            <svg width="20" height="14" viewBox="0 0 20 14">
              <path d="M9.500 1.800h6q2 0 2 2v6.400q0 2-2 2H6.500" fill="none" stroke="#222" strokeWidth="1.500" />
              <path d="M18 5h2v4h-2z" fill="#222" />
              <path d="M8.500 0q2.500 9-4.500 10.500L1.500 14 0 12.500l1-2Q-1.500 4 8.500 0z" fill="#222" />
            </svg>
          </TrayItem>
          <Clock>
            <ClockLine $ls={-0.25}>1:54 PM</ClockLine>
            <ClockLine $ls={0.1}>8/27/2022</ClockLine>
          </Clock>
          <Moon>
            <svg width="17" height="18" viewBox="0 0 17 18" fill="none" stroke="#222" strokeWidth="1.300">
              <path d="M8 .8a8.300 8.300 0 1 1-7.300 13.400Q7 13.500 8.500 9.500 9.700 5 8 .800z" strokeLinejoin="round" />
            </svg>
          </Moon>
        </Tray>
      </Taskbar>
    </Screen>
  );
}
